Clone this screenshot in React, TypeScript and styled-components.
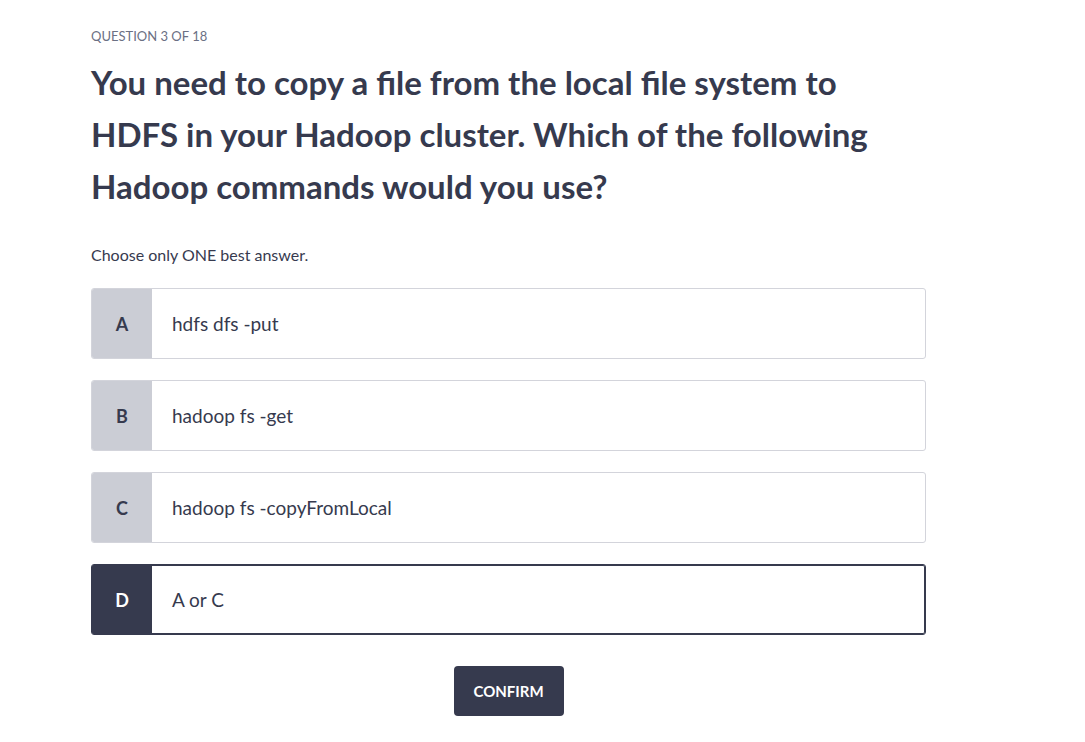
import React from "react";
import styled, { createGlobalStyle } from "styled-components";

const Global = createGlobalStyle`
  html, body { margin: 0; padding: 0; background: #ffffff; }
  body { font-family: Lato, "Noto Sans", sans-serif; color: #373a4f; }
`;

const Page = styled.main`
  width: 835px;
  padding: 27px 0 0 91px;
  display: flex;
  flex-direction: column;
`;

const Counter = styled.div`
  font-size: 13px;
  line-height: 18px;
  color: #6b7084;
  text-transform: uppercase;
`;

const Title = styled.h1`
  margin: 11px 0 0;
  font-size: 33px;
  line-height: 52px;
  font-weight: 700;
  color: #363a4e;
`;

const Hint = styled.p`
  margin: 33px 0 0;
  font-size: 16px;
  line-height: 20px;
  color: #373a4f;
`;

const Options = styled.div`
  margin-top: 23px;
  display: flex;
  flex-direction: column;
  gap: 21px;
`;

const Option = styled.button<{ $selected?: boolean }>`
  display: flex;
  align-items: stretch;
  height: 71px;
  padding: 0;
  border: 1px solid ${(p) => (p.$selected ? "#363a4e" : "#d3d4db")};
  box-shadow: ${(p) => (p.$selected ? "inset 0 0 0 1px #363a4e" : "none")};
  border-radius: 3px;
  background: #ffffff;
  overflow: hidden;
  cursor: pointer;
  text-align: left;
  font-family: inherit;
`;

const Letter = styled.span<{ $selected?: boolean }>`
  flex: 0 0 60px;
  display: flex;
  align-items: center;
  justify-content: center;
  background: ${(p) => (p.$selected ? "#363a4e" : "#cbcdd5")};
  color: ${(p) => (p.$selected ? "#ffffff" : "#363a4e")};
  font-size: 18px;
  font-weight: 700;
`;

const Label = styled.span`
  display: flex;
  align-items: center;
  padding-left: 20px;
  font-size: 19px;
  color: #363a4e;
`;

const Footer = styled.div`
  display: flex;
  justify-content: center;
  margin-top: 31px;
`;

const Confirm = styled.button`
  width: 110px;
  height: 50px;
  border: none;
  border-radius: 4px;
  background: #363a4e;
  color: #ffffff;
  font-family: inherit;
  font-size: 15px;
  font-weight: 700;
  cursor: pointer;
`;

const options = [
  { key: "A", text: "hdfs dfs -put" },
  { key: "B", text: "hadoop fs -get" },
  { key: "C", text: "hadoop fs -copyFromLocal" },
  { key: "D", text: "A or C" },
];

export default function App() {
  const selected = "D";
  return (
    <>
      <Global />
      <Page>
        <Counter>Question 3 of 18</Counter>
        <Title>
          You need to copy a file from the local file system to
          <br />
          HDFS in your Hadoop cluster. Which of the following
          <br />
          Hadoop commands would you use?
        </Title>
        <Hint>Choose only ONE best answer.</Hint>
        <Options>
          {options.map((o) => (
            <Option key={o.key} $selected={o.key === selected}>
              <Letter $selected={o.key === selected}>{o.key}</Letter>
              <Label>{o.text}</Label>
            </Option>
          ))}
        </Options>
        <Footer>
          <Confirm>CONFIRM</Confirm>
        </Footer>
      </Page>
    </>
  );
}
